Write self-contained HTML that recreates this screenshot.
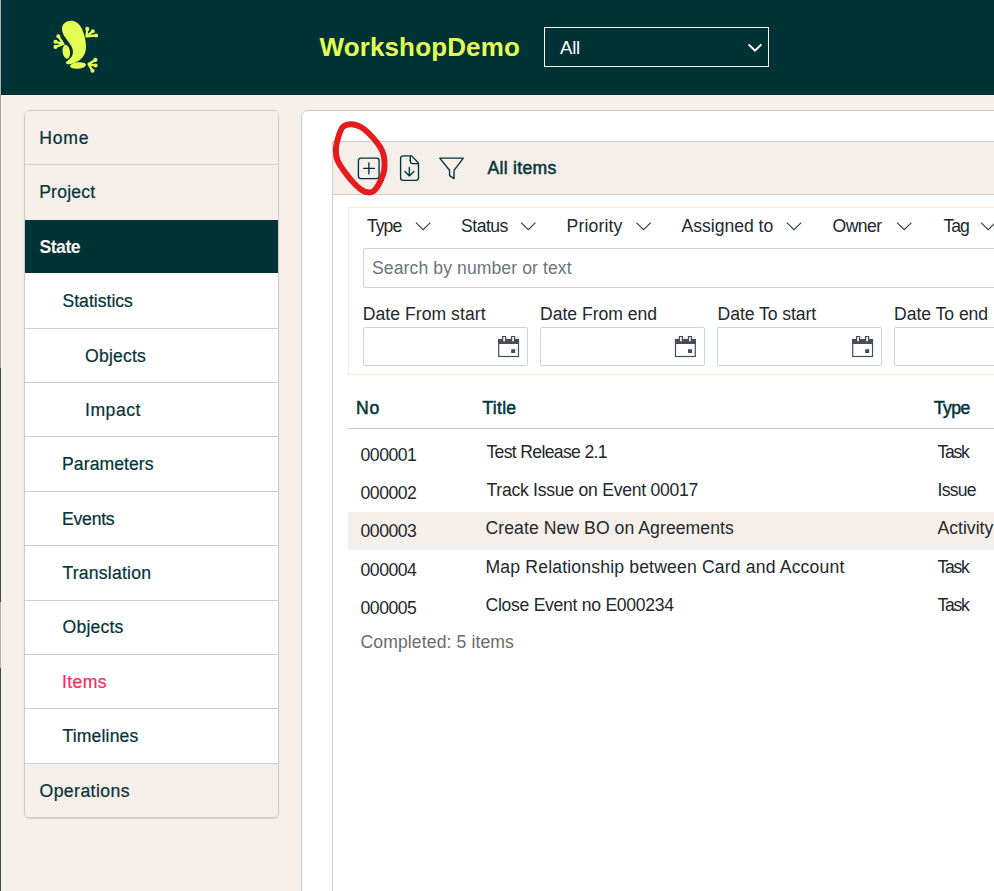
<!DOCTYPE html>
<html lang="en">
<head>
<meta charset="utf-8">
<title>WorkshopDemo</title>
<style>
*{box-sizing:border-box;margin:0;padding:0}
html,body{width:994px;height:891px;overflow:hidden}
body{background:#f6eee9;font-family:"Liberation Sans",sans-serif;color:#0b3438;position:relative}
.t{position:absolute;white-space:nowrap}
.edge{position:absolute;left:0;top:0;width:1px;height:891px;background:linear-gradient(#b5aeac 0,#b5aeac 95px,#a3a3a3 95px,#a3a3a3 368px,#41474b 368px,#41474b 602px,#b4b0ae 602px,#b4b0ae 668px,#41474b 668px)}
.hdr{position:absolute;left:1px;top:0;width:993px;height:95px;background:#003336}
.sel{position:absolute;left:544px;top:27px;width:225px;height:40px;border:1px solid #fff}
.side{position:absolute;left:24px;top:110px;width:255px;height:708px;border:1px solid #cfcac6;border-radius:6px;overflow:hidden;background:#fff;box-shadow:0 1px 1px rgba(0,0,0,.12)}
.it{position:absolute;left:0;width:253px;border-top:1px solid #d3cfcc}
.l0{background:#f6eee9}
.act{background:#003336;border-top-color:#003336}
.card{position:absolute;left:301px;top:110px;width:720px;height:800px;background:#fff;border:1px solid #cfcac6;border-radius:7px}
.panel{position:absolute;left:332px;top:141px;width:700px;height:800px;border:1px solid #d2cdca;background:#fff}
.tbar{position:absolute;left:0;top:0;width:100%;height:53px;background:#f6eee9;border-bottom:1px solid #d2cdca}
.filt{position:absolute;left:348px;top:207px;width:680px;height:168px;border:1px solid #f3ebe6;background:#fff}
.srch{position:absolute;left:363px;top:248px;width:660px;height:40px;border:1px solid #ced4da;border-radius:2px;background:#fff}
.dt{position:absolute;top:327px;width:165px;height:39px;border:1px solid #ced4da;border-radius:2px;background:#fff}
.hr{position:absolute;left:348px;top:428px;width:660px;height:1px;background:#c9c9c9}
.hl{position:absolute;left:348px;top:512px;width:660px;height:38px;background:#f6eee9}
svg{position:absolute;overflow:visible}
</style>
</head>
<body>
<div class="edge"></div>
<div class="hdr">
  <svg style="left:50px;top:19px" width="50" height="56" viewBox="0 0 50 56">
    <g fill="#e4fe55">
      <path d="M11 10 C11 3 19 0 25 3 C31 6 35 18 35 28 C35 37 29 42 23 44 C19 45.5 16 46 15 44 C14 42 22 40 22 33 C22 24 11 19 11 10Z"/>
      <ellipse cx="15.300" cy="32.800" rx="3.700" ry="7" transform="rotate(-8 15.300 32.800)"/>
      <ellipse cx="27" cy="46.5" rx="8" ry="3.2" transform="rotate(-6 27 46.5)"/>
    </g>
    <g stroke="#e4fe55" stroke-width="2.3" stroke-linecap="round" fill="#e4fe55">
<path d="M12.4 24.9L7.3 17.3M12.4 24.9L4.5 22.8M12.4 24.9L4.5 27.9"/><circle cx="7.3" cy="17.3" r="0.9"/><circle cx="4.5" cy="22.8" r="0.9"/><circle cx="4.5" cy="27.9" r="0.9"/>
<path d="M35.5 17.3L36.3 9.9M35.5 17.3L41.8 12.3M35.5 17.3L45.1 16.5"/><circle cx="36.3" cy="9.9" r="0.9"/><circle cx="41.8" cy="12.3" r="0.9"/><circle cx="45.1" cy="16.5" r="0.9"/>
<path d="M37.6 45.1L44.4 40.9M37.6 45.1L44.6 46.5M37.6 45.1L41.5 51.8"/><circle cx="44.4" cy="40.9" r="0.9"/><circle cx="44.6" cy="46.5" r="0.9"/><circle cx="41.5" cy="51.8" r="0.9"/>
</g>
  </svg>
</div>
<div class="sel"><svg style="left:202px;top:15px" width="16" height="10" viewBox="0 0 16 10"><path d="M1.600 1.400 L8 7.600 L14.400 1.400" fill="none" stroke="#fff" stroke-width="2"/></svg></div>

<div class="side">
  <div class="it l0" style="top:-1px;height:54px"></div>
  <div class="it l0" style="top:53px;height:56px"></div>
  <div class="it l0 act" style="top:109px;height:53px"></div>
  <div class="it" style="top:162px;height:55px;border-top:0"></div>
  <div class="it" style="top:217px;height:54px"></div>
  <div class="it" style="top:271px;height:54px"></div>
  <div class="it" style="top:325px;height:55px"></div>
  <div class="it" style="top:380px;height:54px"></div>
  <div class="it" style="top:434px;height:55px"></div>
  <div class="it" style="top:489px;height:54px"></div>
  <div class="it" style="top:543px;height:54px"></div>
  <div class="it" style="top:597px;height:55px"></div>
  <div class="it l0" style="top:652px;height:55px"></div>
</div>

<div class="card"></div>
<div class="panel"><div class="tbar"></div></div>
<div class="filt"></div>
<div class="srch"></div>
<div class="dt" style="left:363px"></div>
<div class="dt" style="left:540px"></div>
<div class="dt" style="left:717px"></div>
<div class="dt" style="left:894px"></div>
<div class="hr"></div>
<div class="hl"></div>
<!--ICONS-->
<svg style="left:0;top:0" width="994" height="891" viewBox="0 0 994 891">
<g fill="none" stroke="#00343a" stroke-width="1.35" stroke-linejoin="round" stroke-linecap="round">
<rect x="358.400" y="158.100" width="20.700" height="20.500" rx="2.600"/>
<path d="M363.700 168.400H374.400M368.900 163.000V173.900"/>
<path d="M403.200 155.900H411.600L418.500 163.000V177.700Q418.500 180.300 415.900 180.300H403.200Q400.600 180.300 400.600 177.700V158.500Q400.600 155.900 403.200 155.900Z"/>
<path d="M410.300 156.100V161.300Q410.300 163.600 412.600 163.600H418.300"/>
<path d="M409.350 167.300V175.400M404.900 171.500L409.350 175.900L413.800 171.500"/>
<path d="M439.700 158.150H463.300L454.050 170.300V178.600L449.550 175.600V170.300Z"/>
</g>
<path d="M351.5 124.2C348.4 124.1 345.0 124.8 342.8 127.0C340.6 129.2 339.5 133.6 338.3 137.2C337.1 140.8 336.0 144.7 335.9 148.5C335.8 152.3 335.8 155.9 337.4 160.0C339.0 164.1 342.4 168.8 345.5 173.0C348.6 177.2 352.8 182.1 355.7 185.0C358.6 187.9 360.6 189.4 362.7 190.6C364.8 191.8 366.7 192.2 368.4 192.4C370.1 192.6 371.6 192.3 373.0 191.5C374.4 190.7 375.4 189.5 376.8 187.5C378.2 185.5 379.9 182.5 381.1 179.7C382.3 176.9 383.6 173.9 384.1 170.6C384.7 167.3 384.7 163.2 384.4 160.0C384.1 156.8 383.7 154.5 382.5 151.6C381.3 148.7 379.4 145.7 377.2 142.8C375.0 139.9 372.0 136.6 369.4 134.0C366.8 131.4 364.7 129.1 361.7 127.5C358.7 125.9 354.6 124.3 351.5 124.2Z" fill="none" stroke="#e51b1c" stroke-width="5.9" stroke-linejoin="round"/>
</svg>
<svg style="left:0;top:0" width="994" height="891" viewBox="0 0 994 891"><g fill="none" stroke="#33383d" stroke-width="1.05"><path d="M415.9 222.7l7.2 7l7.2 -7"/><path d="M521.1 222.7l7.2 7l7.2 -7"/><path d="M636.4 222.7l7.2 7l7.2 -7"/><path d="M786.8 222.7l7.2 7l7.2 -7"/><path d="M897.0 222.7l7.2 7l7.2 -7"/><path d="M981.0 222.7l7.2 7l7.2 -7"/></g><g transform="translate(498.2 336)"><rect x="0.5" y="3.5" width="19.8" height="17" fill="#fff" stroke="#474d53" stroke-width="1.2"/><rect x="0" y="3" width="20.800" height="5" fill="#474d53"/><rect x="3.800" y="0" width="4.200" height="5.800" fill="#474d53"/><rect x="5" y="1" width="1.800" height="4.300" fill="#e8f2fb"/><rect x="12.800" y="0" width="4.200" height="5.800" fill="#474d53"/><rect x="14" y="1" width="1.800" height="4.300" fill="#e8f2fb"/><rect x="13" y="13.200" width="4" height="3.800" fill="#474d53"/></g><g transform="translate(675.0 336)"><rect x="0.5" y="3.5" width="19.8" height="17" fill="#fff" stroke="#474d53" stroke-width="1.2"/><rect x="0" y="3" width="20.800" height="5" fill="#474d53"/><rect x="3.800" y="0" width="4.200" height="5.800" fill="#474d53"/><rect x="5" y="1" width="1.800" height="4.300" fill="#e8f2fb"/><rect x="12.800" y="0" width="4.200" height="5.800" fill="#474d53"/><rect x="14" y="1" width="1.800" height="4.300" fill="#e8f2fb"/><rect x="13" y="13.200" width="4" height="3.800" fill="#474d53"/></g><g transform="translate(852.2 336)"><rect x="0.5" y="3.5" width="19.8" height="17" fill="#fff" stroke="#474d53" stroke-width="1.2"/><rect x="0" y="3" width="20.800" height="5" fill="#474d53"/><rect x="3.800" y="0" width="4.200" height="5.800" fill="#474d53"/><rect x="5" y="1" width="1.800" height="4.300" fill="#e8f2fb"/><rect x="12.800" y="0" width="4.200" height="5.800" fill="#474d53"/><rect x="14" y="1" width="1.800" height="4.300" fill="#e8f2fb"/><rect x="13" y="13.200" width="4" height="3.800" fill="#474d53"/></g></svg>
<div class="t" id="t0" style="left:319.48px;top:32.19px;font-size:26px;line-height:31px;color:#e4fe55;font-weight:bold;letter-spacing:0.131px;">WorkshopDemo</div>
<div class="t" id="t1" style="left:559.94px;top:37.26px;font-size:18.6px;line-height:22px;color:#fff;letter-spacing:-0.180px;">All</div>
<div class="t" id="t2" style="left:39.14px;top:128.10px;font-size:17.6px;line-height:21px;color:#05343a;-webkit-text-stroke:0.22px #05343a;letter-spacing:0.840px;">Home</div>
<div class="t" id="t3" style="left:39.14px;top:182.10px;font-size:17.6px;line-height:21px;color:#05343a;-webkit-text-stroke:0.22px #05343a;letter-spacing:0.210px;">Project</div>
<div class="t" id="t4" style="left:39.52px;top:237.10px;font-size:17.6px;line-height:21px;color:#fbf6f1;font-weight:bold;letter-spacing:-0.495px;">State</div>
<div class="t" id="t5" style="left:62.50px;top:291.10px;font-size:17.6px;line-height:21px;color:#05343a;-webkit-text-stroke:0.22px #05343a;">Statistics</div>
<div class="t" id="t6" style="left:85.02px;top:346.10px;font-size:17.6px;line-height:21px;color:#05343a;-webkit-text-stroke:0.22px #05343a;letter-spacing:0.210px;">Objects</div>
<div class="t" id="t7" style="left:85.06px;top:400.10px;font-size:17.6px;line-height:21px;color:#05343a;-webkit-text-stroke:0.22px #05343a;letter-spacing:0.504px;">Impact</div>
<div class="t" id="t8" style="left:62.08px;top:454.10px;font-size:17.6px;line-height:21px;color:#05343a;-webkit-text-stroke:0.22px #05343a;letter-spacing:0.060px;">Parameters</div>
<div class="t" id="t9" style="left:62.08px;top:509.10px;font-size:17.6px;line-height:21px;color:#05343a;-webkit-text-stroke:0.22px #05343a;letter-spacing:-0.252px;">Events</div>
<div class="t" id="t10" style="left:62.48px;top:563.10px;font-size:17.6px;line-height:21px;color:#05343a;-webkit-text-stroke:0.22px #05343a;letter-spacing:0.216px;">Translation</div>
<div class="t" id="t11" style="left:62.50px;top:617.10px;font-size:17.6px;line-height:21px;color:#05343a;-webkit-text-stroke:0.22px #05343a;letter-spacing:0.210px;">Objects</div>
<div class="t" id="t12" style="left:62.12px;top:672.10px;font-size:17.6px;line-height:21px;color:#fb2c61;-webkit-text-stroke:0.22px #fb2c61;letter-spacing:0.360px;">Items</div>
<div class="t" id="t13" style="left:62.48px;top:726.10px;font-size:17.6px;line-height:21px;color:#05343a;-webkit-text-stroke:0.22px #05343a;letter-spacing:0.158px;">Timelines</div>
<div class="t" id="t14" style="left:39.52px;top:781.10px;font-size:17.6px;line-height:21px;color:#05343a;-webkit-text-stroke:0.22px #05343a;letter-spacing:0.440px;">Operations</div>
<div class="t" id="t15" style="left:487.38px;top:158.10px;font-size:17.6px;line-height:21px;color:#05343a;-webkit-text-stroke:0.5px #05343a;letter-spacing:0.315px;">All items</div>
<div class="t" id="t16" style="left:366.94px;top:216.10px;font-size:17.6px;line-height:21px;color:#23282d;letter-spacing:-0.960px;">Type</div>
<div class="t" id="t17" style="left:461.02px;top:216.10px;font-size:17.6px;line-height:21px;color:#23282d;letter-spacing:-0.504px;">Status</div>
<div class="t" id="t18" style="left:566.56px;top:216.10px;font-size:17.6px;line-height:21px;color:#23282d;letter-spacing:0.154px;">Priority</div>
<div class="t" id="t19" style="left:681.48px;top:216.10px;font-size:17.6px;line-height:21px;color:#23282d;letter-spacing:-0.018px;">Assigned to</div>
<div class="t" id="t20" style="left:832.50px;top:216.10px;font-size:17.6px;line-height:21px;color:#23282d;letter-spacing:-0.540px;">Owner</div>
<div class="t" id="t21" style="left:943.46px;top:216.10px;font-size:17.6px;line-height:21px;color:#23282d;letter-spacing:-0.990px;">Tag</div>
<div class="t" id="t22" style="left:372.06px;top:258.10px;font-size:17.6px;line-height:21px;color:#6c757d;letter-spacing:0.086px;">Search by number or text</div>
<div class="t" id="t23" style="left:362.64px;top:304.10px;font-size:17.6px;line-height:21px;color:#23282d;letter-spacing:0.051px;">Date From start</div>
<div class="t" id="t24" style="left:540.08px;top:304.10px;font-size:17.6px;line-height:21px;color:#23282d;letter-spacing:-0.030px;">Date From end</div>
<div class="t" id="t25" style="left:717.58px;top:304.10px;font-size:17.6px;line-height:21px;color:#23282d;letter-spacing:-0.075px;">Date To start</div>
<div class="t" id="t26" style="left:894.12px;top:304.10px;font-size:17.6px;line-height:21px;color:#23282d;letter-spacing:-0.054px;">Date To end</div>
<div class="t" id="t27" style="left:356.06px;top:398.10px;font-size:17.6px;line-height:21px;color:#05343a;-webkit-text-stroke:0.5px #05343a;letter-spacing:0.720px;">No</div>
<div class="t" id="t28" style="left:482.48px;top:398.10px;font-size:17.6px;line-height:21px;color:#05343a;-webkit-text-stroke:0.5px #05343a;letter-spacing:0.270px;">Title</div>
<div class="t" id="t29" style="left:933.94px;top:398.10px;font-size:17.6px;line-height:21px;color:#05343a;-webkit-text-stroke:0.5px #05343a;letter-spacing:-0.600px;">Type</div>
<div class="t" id="t30" style="left:360.52px;top:445.10px;font-size:17.6px;line-height:21px;color:#23282d;letter-spacing:-0.468px;">000001</div>
<div class="t" id="t31" style="left:486.46px;top:442.10px;font-size:17.6px;line-height:21px;color:#23282d;letter-spacing:-0.660px;">Test Release 2.1</div>
<div class="t" id="t32" style="left:937.54px;top:442.10px;font-size:17.6px;line-height:21px;color:#23282d;letter-spacing:-1.320px;">Task</div>
<div class="t" id="t33" style="left:360.52px;top:483.10px;font-size:17.6px;line-height:21px;color:#23282d;letter-spacing:-0.468px;">000002</div>
<div class="t" id="t34" style="left:486.46px;top:480.10px;font-size:17.6px;line-height:21px;color:#23282d;letter-spacing:-0.259px;">Track Issue on Event 00017</div>
<div class="t" id="t35" style="left:937.60px;top:480.10px;font-size:17.6px;line-height:21px;color:#23282d;letter-spacing:-0.765px;">Issue</div>
<div class="t" id="t36" style="left:360.52px;top:521.10px;font-size:17.6px;line-height:21px;color:#23282d;letter-spacing:-0.468px;">000003</div>
<div class="t" id="t37" style="left:485.56px;top:518.10px;font-size:17.6px;line-height:21px;color:#23282d;letter-spacing:0.069px;">Create New BO on Agreements</div>
<div class="t" id="t38" style="left:937.50px;top:518.10px;font-size:17.6px;line-height:21px;color:#23282d;">Activity</div>
<div class="t" id="t39" style="left:360.52px;top:560.10px;font-size:17.6px;line-height:21px;color:#23282d;letter-spacing:-0.468px;">000004</div>
<div class="t" id="t40" style="left:485.56px;top:557.10px;font-size:17.6px;line-height:21px;color:#23282d;letter-spacing:0.167px;">Map Relationship between Card and Account</div>
<div class="t" id="t41" style="left:937.54px;top:557.10px;font-size:17.6px;line-height:21px;color:#23282d;letter-spacing:-1.320px;">Task</div>
<div class="t" id="t42" style="left:360.52px;top:598.10px;font-size:17.6px;line-height:21px;color:#23282d;letter-spacing:-0.468px;">000005</div>
<div class="t" id="t43" style="left:485.56px;top:595.10px;font-size:17.6px;line-height:21px;color:#23282d;letter-spacing:-0.291px;">Close Event no E000234</div>
<div class="t" id="t44" style="left:937.54px;top:595.10px;font-size:17.6px;line-height:21px;color:#23282d;letter-spacing:-1.320px;">Task</div>
<div class="t" id="t45" style="left:360.50px;top:632.10px;font-size:17.6px;line-height:21px;color:#696b6d;letter-spacing:0.106px;">Completed: 5 items</div>
</body>
</html>
